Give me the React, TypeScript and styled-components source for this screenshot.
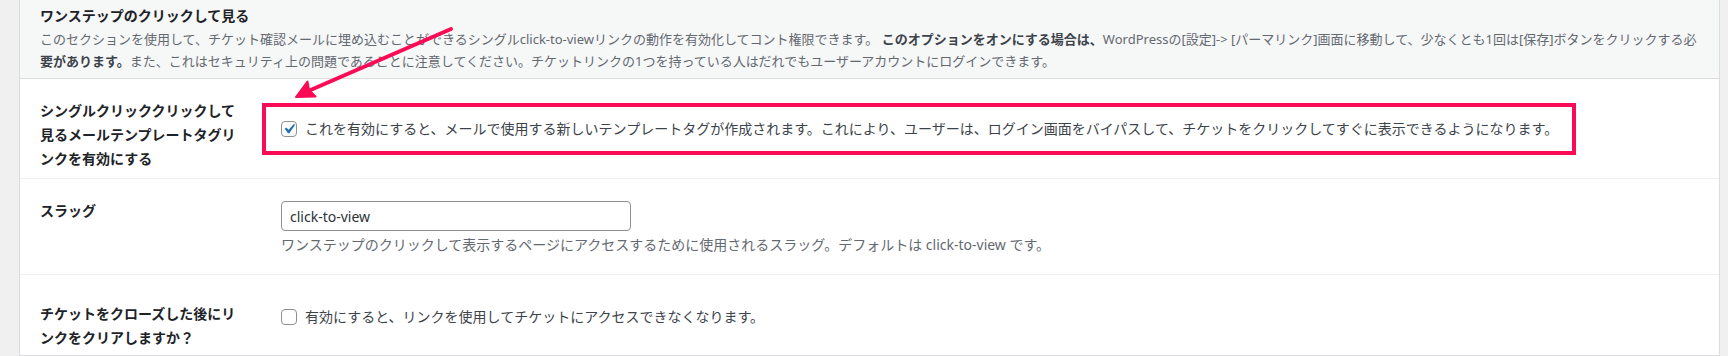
import React from 'react';
import styled, { createGlobalStyle } from 'styled-components';

const GlobalStyle = createGlobalStyle`
  html, body {
    margin: 0;
    padding: 0;
    background: #f0f0f1;
  }
  body {
    font-family: "Noto Sans", "Noto Sans CJK JP", sans-serif;
    color: #3c434a;
  }
`;

const ACCENT = '#fb0a55';

const App = () => {
  return (
    <>
      <GlobalStyle />
      <Page>
        <Panel>
          <Header>
            <Title>ワンステップのクリックして見る</Title>
            <HeaderText>
              このセクションを使用して、チケット確認メールに埋め込むことができるシングルclick-to-viewリンクの動作を有効化してコント権限できます。{' '}
              <strong>このオプションをオンにする場合は、</strong>WordPressの[設定]-&gt; [パーマリンク]画面に移動して、少なくとも1回は[保存]ボタンをクリックする必
              <strong>要があります。</strong>また、これはセキュリティ上の問題であることに注意してください。チケットリンクの1つを持っている人はだれでもユーザーアカウントにログインできます。
            </HeaderText>
          </Header>

          <Row $height={100}>
            <Label $top={20}>シングルクリッククリックして見るメールテンプレートタグリンクを有効にする</Label>
            <Field $top={40}>
              <CheckLine>
                <Check>
                  <svg width="20" height="20" viewBox="0 0 20 20">
                    <path d="M14.83 4.89l1.34.94-5.81 8.38H9.02L5.78 9.67l1.34-1.25 2.57 2.4z" fill="#2271b1" />
                  </svg>
                </Check>
                これを有効にすると、メールで使用する新しいテンプレートタグが作成されます。これにより、ユーザーは、ログイン画面をバイパスして、チケットをクリックしてすぐに表示できるようになります。
              </CheckLine>
            </Field>
          </Row>

          <Row $height={96}>
            <Label $top={20}>スラッグ</Label>
            <Field $top={22}>
              <TextInput defaultValue="click-to-view" />
              <Description>
                ワンステップのクリックして表示するページにアクセスするために使用されるスラッグ。デフォルトは click-to-view です。
              </Description>
            </Field>
          </Row>

          <Row $height={80}>
            <Label $top={27}>チケットをクローズした後にリンクをクリアしますか？</Label>
            <Field $top={32}>
              <CheckLine>
                <Check />
                有効にすると、リンクを使用してチケットにアクセスできなくなります。
              </CheckLine>
            </Field>
          </Row>
        </Panel>

        {/* annotation drawn over the screenshot */}
        <Highlight />
        <Arrow width="1728" height="356" viewBox="0 0 1728 356">
          <line x1="451" y1="29" x2="306" y2="92" stroke={ACCENT} strokeWidth="4" strokeLinecap="round" />
          <polygon points="296,97 307.5,81.5 309,90 315.5,96.5" fill={ACCENT} stroke={ACCENT} strokeWidth="2" strokeLinejoin="round" />
        </Arrow>
      </Page>
    </>
  );
};

export default App;

const Page = styled.div`
  position: relative;
  display: flex;
  width: 1728px;
  height: 356px;
  padding: 0 8px 0 19px;
  box-sizing: border-box;
  background: #f0f0f1;
  overflow: hidden;
`;

const Panel = styled.div`
  flex: 1;
  display: flex;
  flex-direction: column;
  align-self: flex-start;
  background: #fff;
  border-left: 1px solid #dcdcde;
  border-right: 1px solid #dcdcde;
  border-bottom: 1px solid #dcdcde;
`;

const Header = styled.div`
  height: 79px;
  box-sizing: border-box;
  padding: 6px 20px 0 20px;
  background: #f6f7f7;
  border-bottom: 1px solid #dcdcde;
`;

const Title = styled.div`
  font-size: 14px;
  line-height: 20px;
  font-weight: 700;
  color: #1d2327;
`;

const HeaderText = styled.div`
  margin-top: 2px;
  font-size: 13px;
  line-height: 22px;
  color: #646970;

  strong {
    font-weight: 700;
    color: #3c434a;
  }
`;

const Row = styled.div<{ $height: number }>`
  display: flex;
  height: ${(p) => p.$height}px;
  box-sizing: border-box;
  padding: 0 20px;
  border-bottom: 1px solid #f0f0f1;

  &:last-child {
    border-bottom: none;
  }
`;

const Label = styled.div<{ $top: number }>`
  width: 200px;
  margin-right: 41px;
  padding-top: ${(p) => p.$top}px;
  font-size: 14px;
  line-height: 24px;
  font-weight: 700;
  color: #1d2327;
`;

const Field = styled.div<{ $top: number }>`
  flex: 1;
  padding-top: ${(p) => p.$top}px;
`;

const CheckLine = styled.label`
  display: flex;
  align-items: center;
  gap: 8px;
  font-size: 14px;
  line-height: 20px;
  color: #3c434a;
`;

const Check = styled.span`
  display: inline-flex;
  align-items: center;
  justify-content: center;
  width: 16px;
  height: 16px;
  box-sizing: border-box;
  flex-shrink: 0;
  border: 1px solid #8c8f94;
  border-radius: 4px;
  background: #fff;
  overflow: visible;

  svg {
    flex-shrink: 0;
    margin: -2px;
  }
`;

const TextInput = styled.input`
  display: block;
  width: 350px;
  height: 30px;
  box-sizing: border-box;
  padding: 0 8px;
  border: 1px solid #8c8f94;
  border-radius: 4px;
  font-family: "Noto Sans", "Noto Sans CJK JP", sans-serif;
  font-size: 14px;
  color: #2c3338;
  background: #fff;
  outline: none;
`;

const Description = styled.div`
  margin-top: 3px;
  font-size: 14px;
  line-height: 22px;
  color: #646970;
`;

const Highlight = styled.div`
  position: absolute;
  left: 262px;
  top: 103px;
  width: 1314px;
  height: 52px;
  box-sizing: border-box;
  border: 4px solid ${ACCENT};
  pointer-events: none;
`;

const Arrow = styled.svg`
  position: absolute;
  left: 0;
  top: 0;
  pointer-events: none;
`;
